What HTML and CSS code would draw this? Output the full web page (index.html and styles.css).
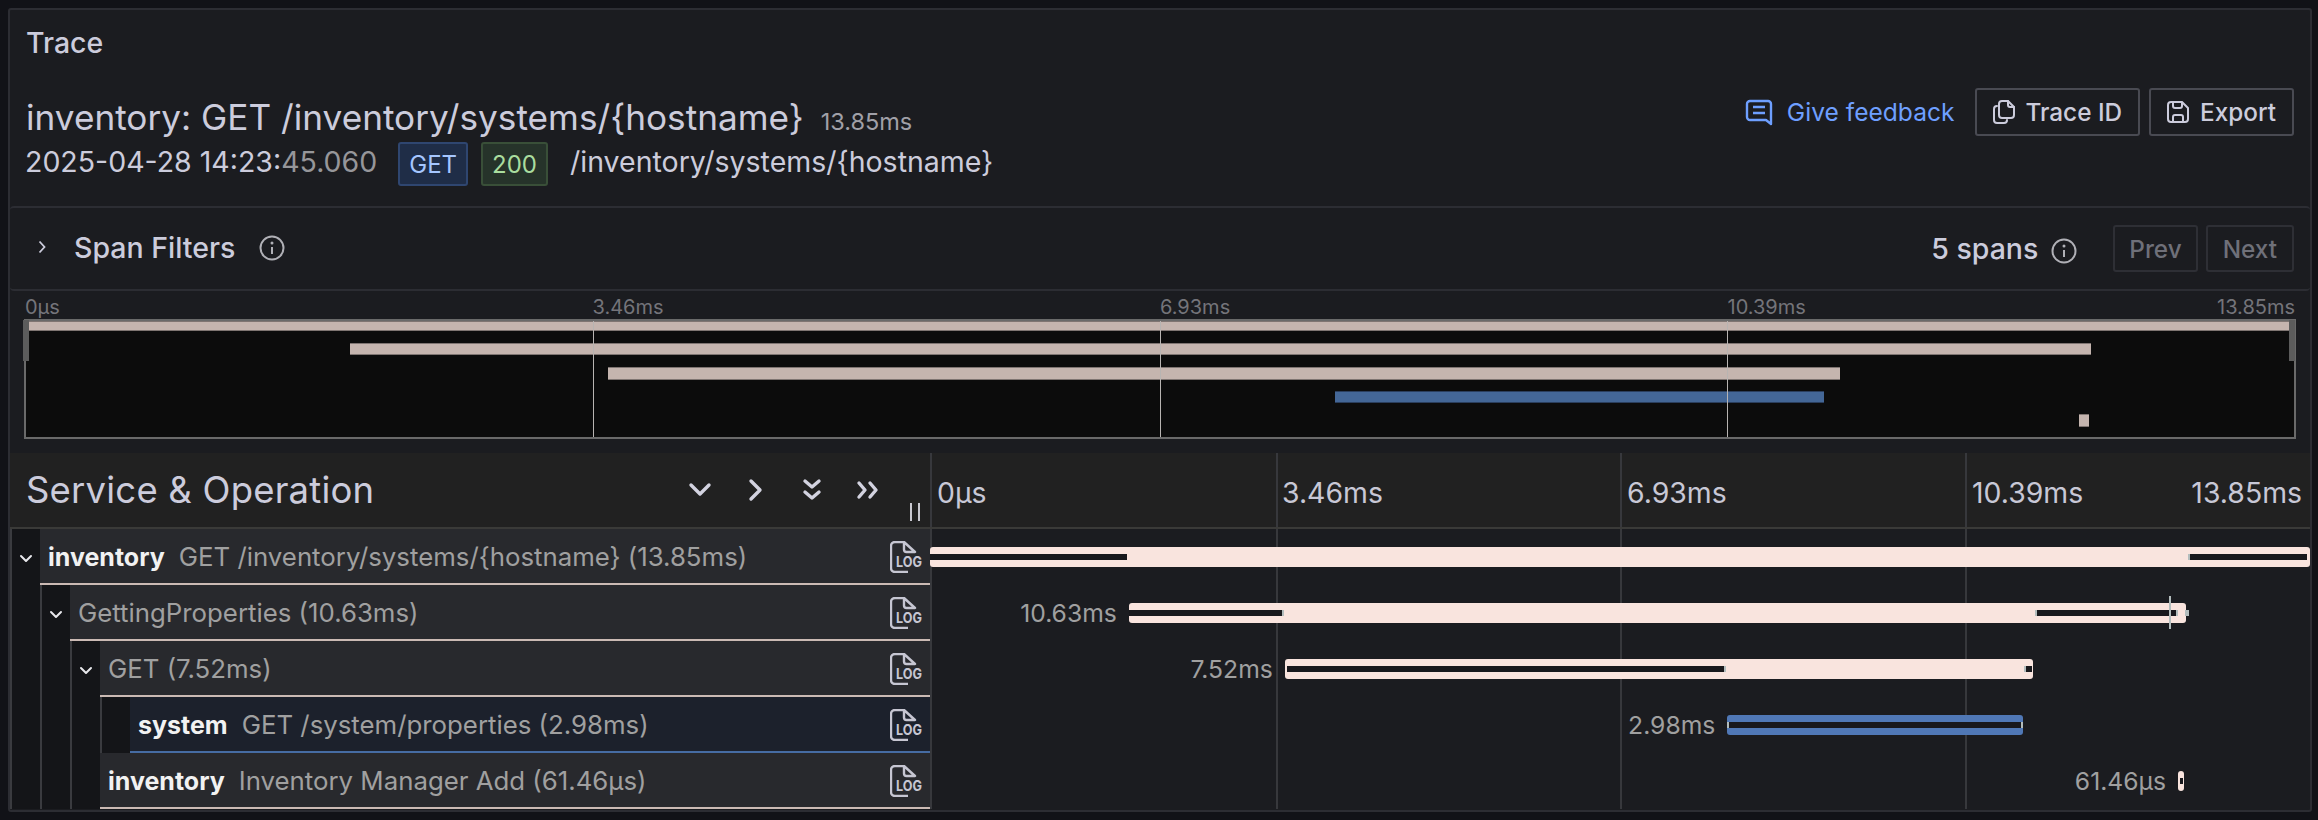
FILE: index.html
```html
<!DOCTYPE html>
<html lang="en">
<head>
<meta charset="utf-8">
<title>Trace</title>
<link rel="stylesheet" href="styles.css">
</head>
<body>
<main class="panel">
  <div class="panel-title">Trace</div>

  <header class="trace-head">
    <div class="trace-info">
      <div class="trace-name">
        <h1 class="trace-title">inventory: GET /inventory/systems/{hostname}</h1>
        <span class="trace-duration">13.85ms</span>
      </div>
      <div class="trace-meta">
        <span class="trace-time">2025-04-28 14:23:<span class="trace-time-dim">45.060</span></span>
        <span class="tag tag-blue">GET</span>
        <span class="tag tag-green">200</span>
        <span class="trace-url">/inventory/systems/{hostname}</span>
      </div>
    </div>
    <div class="trace-actions">
      <a class="feedback">
        <svg class="feedback-icon" width="28" height="27" viewBox="0 0 28 27"><path d="M5 2h18a3 3 0 0 1 3 3v20l-5-4H5a3 3 0 0 1-3-3V5a3 3 0 0 1 3-3z"/><path d="M8 8h12M8 14h12"/></svg>
        Give feedback
      </a>
      <button class="btn btn-trace">
        <svg class="btn-icon" width="22" height="24" viewBox="0 0 22 24"><path d="M9 1h6l6 6v8a3 3 0 0 1-3 3H9a3 3 0 0 1-3-3V4a3 3 0 0 1 3-3z"/><path d="M15 1v4a2 2 0 0 0 2 2h4"/><path d="M4 6a3 3 0 0 0-3 3v11a3 3 0 0 0 3 3h7a3 3 0 0 0 3-3"/></svg>
        Trace ID
      </button>
      <button class="btn btn-export">
        <svg class="btn-icon" width="22" height="22" viewBox="0 0 22 22"><path d="M4 1h11l6 6v11a3 3 0 0 1-3 3H4a3 3 0 0 1-3-3V4a3 3 0 0 1 3-3z"/><path d="M6 1v4a2 2 0 0 0 2 2h5a2 2 0 0 0 2-2V1.500"/><path d="M6 21v-5a2 2 0 0 1 2-2h6a2 2 0 0 1 2 2v5"/></svg>
        Export
      </button>
    </div>
  </header>

  <section class="filters">
    <svg class="filters-chevron" width="8" height="14" viewBox="0 0 8 14"><path d="M1.500 1.500L6.500 7l-5 5.500"/></svg>
    <span class="filters-label">Span Filters</span>
    <svg class="info-icon filters-info" width="26" height="26" viewBox="0 0 26 26"><circle class="info-line" cx="13" cy="13" r="11.500"/><path class="info-line" d="M13 12v7"/><circle class="info-dot" cx="13" cy="8" r="1.500"/></svg>
    <span class="filters-count">5 spans</span>
    <svg class="info-icon count-info" width="26" height="26" viewBox="0 0 26 26"><circle class="info-line" cx="13" cy="13" r="11.500"/><path class="info-line" d="M13 12v7"/><circle class="info-dot" cx="13" cy="8" r="1.500"/></svg>
    <button class="btn btn-off btn-prev">Prev</button>
    <button class="btn btn-off btn-next">Next</button>
  </section>

  <section class="minimap">
    <div class="ruler ruler-mini">
      <span class="ruler-cell">0µs</span>
      <span class="ruler-cell">3.46ms</span>
      <span class="ruler-cell">6.93ms</span>
      <span class="ruler-cell ruler-last"><span>10.39ms</span><span>13.85ms</span></span>
    </div>
    <div class="mini-box">
      <i class="mini-bar" style="left:0;width:100%;top:0;height:10px"></i>
      <i class="mini-bar" style="left:14.27%;width:76.8%;top:22px;height:12px"></i>
      <i class="mini-bar" style="left:25.64%;width:54.36%;top:46px;height:13px"></i>
      <i class="mini-bar mini-blue" style="left:57.7%;width:21.56%;top:70px;height:12px"></i>
      <i class="mini-bar" style="left:90.53%;width:0.44%;top:93px;height:13px"></i>
      <i class="mini-tick" style="left:25%"></i>
      <i class="mini-tick" style="left:50%"></i>
      <i class="mini-tick" style="left:75%"></i>
      <i class="mini-handle mini-handle-l"></i>
      <i class="mini-handle mini-handle-r"></i>
    </div>
  </section>

  <section class="viewer">
    <div class="v-row v-head">
      <div class="v-left head-left">
        <h2 class="head-title">Service &amp; Operation</h2>
        <div class="head-icons">
          <svg class="head-icon" width="24" height="16" viewBox="0 0 24 16"><path d="M3 3l9 9 9-9"/></svg>
          <svg class="head-icon" width="16" height="24" viewBox="0 0 16 24"><path d="M3 3l9 9-9 9"/></svg>
          <svg class="head-icon" width="20" height="24" viewBox="0 0 20 24"><path d="M3 3l7 6 7-6M3 14l7 6 7-6"/></svg>
          <svg class="head-icon" width="24" height="20" viewBox="0 0 24 20"><path d="M3 3l6 7-6 7M14 3l6 7-6 7"/></svg>
        </div>
        <i class="resizer"></i>
      </div>
      <div class="v-right ruler ruler-main ticks">
        <span class="ruler-cell">0µs</span>
        <span class="ruler-cell">3.46ms</span>
        <span class="ruler-cell">6.93ms</span>
        <span class="ruler-cell ruler-last"><span>10.39ms</span><span>13.85ms</span></span>
      </div>
    </div>

    <div class="v-row">
      <div class="v-left">
        <span class="indent"><svg class="indent-chevron" width="14" height="10" viewBox="0 0 14 10"><path d="M2 2l5 5 5-5"/></svg></span>
        <div class="span-name">
          <span class="span-text"><b class="svc">inventory</b><span class="op">GET /inventory/systems/{hostname} (13.85ms)</span></span>
          <svg class="log-icon" width="38" height="32" viewBox="0 0 38 32"><path class="log-line" d="M14 1H5a4 4 0 0 0-4 4v22a4 4 0 0 0 4 4h13"/><path class="log-line" d="M14 1l11 10H16.500a2.500 2.500 0 0 1-2.500-2.500z"/><text class="log-text" x="6" y="25.500" textLength="26" lengthAdjust="spacingAndGlyphs">LOG</text></svg>
        </div>
      </div>
      <div class="v-right ticks">
        <div class="bar" style="left:0;width:100%">
          <i class="seg" style="left:0;width:197px"></i>
          <i class="seg seg-start" style="left:1258px;width:119px"></i>
        </div>
      </div>
    </div>

    <div class="v-row">
      <div class="v-left">
        <span class="indent"></span>
        <span class="indent"><svg class="indent-chevron" width="14" height="10" viewBox="0 0 14 10"><path d="M2 2l5 5 5-5"/></svg></span>
        <div class="span-name">
          <span class="span-text"><span class="op op-only">GettingProperties (10.63ms)</span></span>
          <svg class="log-icon" width="38" height="32" viewBox="0 0 38 32"><path class="log-line" d="M14 1H5a4 4 0 0 0-4 4v22a4 4 0 0 0 4 4h13"/><path class="log-line" d="M14 1l11 10H16.500a2.500 2.500 0 0 1-2.500-2.500z"/><text class="log-text" x="6" y="25.500" textLength="26" lengthAdjust="spacingAndGlyphs">LOG</text></svg>
        </div>
      </div>
      <div class="v-right ticks">
        <div class="bar" style="left:14.41%;width:76.61%">
          <span class="bar-label">10.63ms</span>
          <i class="seg seg-end" style="left:0;width:155px"></i>
          <i class="seg seg-start seg-end" style="left:906px;width:143px"></i>
          <i class="log-mark" style="left:1040px"></i>
          <i class="bar-tail"></i>
        </div>
      </div>
    </div>

    <div class="v-row">
      <div class="v-left">
        <span class="indent"></span>
        <span class="indent"></span>
        <span class="indent"><svg class="indent-chevron" width="14" height="10" viewBox="0 0 14 10"><path d="M2 2l5 5 5-5"/></svg></span>
        <div class="span-name">
          <span class="span-text"><span class="op op-only">GET (7.52ms)</span></span>
          <svg class="log-icon" width="38" height="32" viewBox="0 0 38 32"><path class="log-line" d="M14 1H5a4 4 0 0 0-4 4v22a4 4 0 0 0 4 4h13"/><path class="log-line" d="M14 1l11 10H16.500a2.500 2.500 0 0 1-2.500-2.500z"/><text class="log-text" x="6" y="25.500" textLength="26" lengthAdjust="spacingAndGlyphs">LOG</text></svg>
        </div>
      </div>
      <div class="v-right ticks">
        <div class="bar" style="left:25.71%;width:54.24%">
          <span class="bar-label">7.52ms</span>
          <i class="seg seg-end" style="left:2px;width:439px"></i>
          <i class="seg seg-start" style="left:739px;width:8px"></i>
        </div>
      </div>
    </div>

    <div class="v-row">
      <div class="v-left">
        <span class="indent"></span>
        <span class="indent"></span>
        <span class="indent"></span>
        <span class="indent"></span>
        <div class="span-name span-selected">
          <span class="span-text"><b class="svc">system</b><span class="op">GET /system/properties (2.98ms)</span></span>
          <svg class="log-icon" width="38" height="32" viewBox="0 0 38 32"><path class="log-line" d="M14 1H5a4 4 0 0 0-4 4v22a4 4 0 0 0 4 4h13"/><path class="log-line" d="M14 1l11 10H16.500a2.500 2.500 0 0 1-2.500-2.500z"/><text class="log-text" x="6" y="25.500" textLength="26" lengthAdjust="spacingAndGlyphs">LOG</text></svg>
        </div>
      </div>
      <div class="v-right ticks">
        <div class="bar bar-blue" style="left:57.78%;width:21.43%">
          <span class="bar-label">2.98ms</span>
          <i class="seg seg-start seg-end" style="left:0;width:296px"></i>
        </div>
      </div>
    </div>

    <div class="v-row">
      <div class="v-left">
        <span class="indent"></span>
        <span class="indent"></span>
        <span class="indent"></span>
        <div class="span-name">
          <span class="span-text"><b class="svc">inventory</b><span class="op">Inventory Manager Add (61.46µs)</span></span>
          <svg class="log-icon" width="38" height="32" viewBox="0 0 38 32"><path class="log-line" d="M14 1H5a4 4 0 0 0-4 4v22a4 4 0 0 0 4 4h13"/><path class="log-line" d="M14 1l11 10H16.500a2.500 2.500 0 0 1-2.500-2.500z"/><text class="log-text" x="6" y="25.500" textLength="26" lengthAdjust="spacingAndGlyphs">LOG</text></svg>
        </div>
      </div>
      <div class="v-right ticks">
        <div class="bar" style="left:90.44%;width:0.43%">
          <span class="bar-label">61.46µs</span>
          <i class="seg" style="left:2px;width:3px"></i>
        </div>
      </div>
    </div>
  </section>
</main>
</body>
</html>
```

FILE: styles.css
```css
* { box-sizing: border-box; }

html, body { height: 100%; }

body {
  margin: 0;
  background: #111217;
  color: #ccccdc;
  font-family: Inter, "Liberation Sans", sans-serif;
  overflow: hidden;
}

.panel {
  margin: 8px 6px 0 8px;
  height: 804px;
  border: 2px solid #2c2d33;
  border-radius: 3px;
  background: #1b1c20;
  display: flex;
  flex-direction: column;
  overflow: hidden;
}

.panel-title {
  height: 66px;
  line-height: 66px;
  padding-left: 16px;
  font-size: 28.500px;
  font-weight: 500;
}

/* header */
.trace-head {
  height: 130px;
  padding: 19px 16px 0;
  display: flex;
  justify-content: space-between;
  align-items: flex-start;
}

.trace-name {
  display: flex;
  align-items: baseline;
  height: 44px;
  line-height: 44px;
}

.trace-title {
  margin: 0;
  font-size: 35.200px;
  font-weight: 400;
}

.trace-duration {
  margin-left: 17px;
  font-size: 23.500px;
  color: #a0a0a8;
}

.trace-meta {
  display: flex;
  align-items: flex-start;
  margin: 3px 0 0 -1px;
  font-size: 28.500px;
  line-height: 40px;
}

.trace-time-dim { color: #96969a; }

.tag {
  height: 44px;
  line-height: 42px;
  padding: 0 9px;
  border: 2px solid;
  border-radius: 3px;
  font-size: 24px;
  margin-left: 13px;
}

.tag-blue {
  margin-left: 21px;
  background: #1f2d47;
  border-color: #2f4670;
  color: #a5c6ff;
}

.tag-green {
  background: #26332a;
  border-color: #394f38;
  color: #a9dd9e;
}

.trace-url { margin-left: 22px; }

.trace-actions {
  display: flex;
  align-items: center;
  margin-top: -7px;
}

.feedback {
  display: flex;
  align-items: center;
  gap: 14px;
  margin-right: 20px;
  font-size: 24.600px;
  color: #6e9fff;
}

.feedback-icon {
  fill: none;
  stroke: #6e9fff;
  stroke-width: 2.400;
  stroke-linejoin: round;
}

.btn {
  height: 48px;
  padding: 0 16px;
  border: 2px solid #494a52;
  border-radius: 3px;
  background: transparent;
  color: #ccccdc;
  font-family: inherit;
  font-size: 24.300px;
  font-weight: 500;
  display: inline-flex;
  align-items: center;
  gap: 11px;
}

.btn-icon {
  fill: none;
  stroke: #ccccdc;
  stroke-width: 2;
  stroke-linejoin: round;
  stroke-linecap: round;
}

.btn-export { margin-left: 9px; }

.btn-off {
  height: 47px;
  padding: 0 15px;
  border-color: #2e2f35;
  color: #6f7079;
}

.btn-prev { margin-left: 36px; padding: 0 14px; }
.btn-next { margin-left: 8px; }

/* filters */
.filters {
  height: 85px;
  padding: 0 16px 0 28px;
  border: 2px solid #2c2d33;
  border-width: 2px 0 2px 0;
  border-radius: 4px;
  display: flex;
  align-items: center;
}

.filters-chevron {
  fill: none;
  stroke: #ccccdc;
  stroke-width: 1.800;
  margin-top: -4px;
}

.filters-label {
  margin-left: 28px;
  margin-top: -2px;
  font-size: 28.500px;
  font-weight: 500;
}

.info-icon { flex: none; }
.info-line { fill: none; stroke: #b0b0b6; stroke-width: 2; }
.info-dot { fill: #b0b0b6; }

.filters-info { margin-left: 24px; margin-top: -2px; }

.filters-count {
  margin-left: auto;
  font-size: 28.500px;
  font-weight: 500;
}

.count-info { margin-left: 13px; margin-top: 4px; }

/* minimap */
.minimap {
  height: 162px;
  padding: 0 14px 14px 14px;
}

.ruler {
  display: grid;
  grid-template-columns: repeat(4, 1fr);
}

.ruler-last {
  display: flex;
  justify-content: space-between;
}

.ruler-mini {
  height: 28px;
  padding: 4px 1px 0;
  line-height: 24px;
  font-size: 20px;
  color: #74747a;
}

.mini-box {
  position: relative;
  height: 120px;
  background: #0c0c0c;
  border: 2px solid #6a6a6a;
}

.mini-bar {
  position: absolute;
  background: #c5b5af;
  border-top: 1px solid #7f7572;
  border-bottom: 1px solid #7f7572;
}

.mini-blue {
  background: #446797;
  border-color: #2b3f5e;
}

.mini-tick {
  position: absolute;
  top: 0;
  bottom: 0;
  width: 1px;
  background: #b8b4b2;
}

.mini-handle {
  position: absolute;
  top: -1px;
  width: 6px;
  height: 41px;
  background: #5c5c5c;
}

.mini-handle-l { left: -3px; }
.mini-handle-r { right: -1px; }

/* viewer */
.viewer { flex: 1; }

.v-row {
  display: grid;
  grid-template-columns: 920px 1fr;
  height: 56px;
}

.v-left {
  display: flex;
  position: relative;
  min-width: 0;
}

.v-right {
  position: relative;
}

.ticks {
  background-image:
    linear-gradient(#37383c, #37383c),
    linear-gradient(#37383c, #37383c),
    linear-gradient(#37383c, #37383c),
    linear-gradient(#37383c, #37383c);
  background-repeat: no-repeat;
  background-size: 2px 100%;
  background-position: 0 0, calc(25% + 1px) 0, calc(50% + 1px) 0, calc(75% + 1px) 0;
}

.v-head {
  height: 76px;
  background: #212121;
  border-bottom: 2px solid #3a3a38;
}

.head-left {
  align-items: center;
  padding: 0 34px 0 16px;
}

.head-title {
  margin: 0;
  font-size: 36.500px;
  font-weight: 400;
  letter-spacing: 0.2px;
}

.head-icons {
  margin-left: auto;
  display: grid;
  grid-template-columns: repeat(4, 56px);
  justify-items: center;
  align-items: center;
}

.head-icon {
  fill: none;
  stroke: #d3d3e0;
  stroke-width: 3.400;
  stroke-linecap: round;
  stroke-linejoin: round;
}

.resizer {
  position: absolute;
  right: 10px;
  bottom: 6px;
  width: 10px;
  height: 18px;
  border-left: 2px solid #c8c8d0;
  border-right: 2px solid #c8c8d0;
}

.ruler-main {
  align-items: center;
  padding-top: 4px;
  font-size: 28.400px;
  color: #c8c8d6;
}

.ruler-main .ruler-cell { padding-left: 7px; }
.ruler-main .ruler-last { padding-right: 8px; }

.indent {
  flex: none;
  width: 30px;
  border-left: 2px solid #3a3b3f;
  background: #141518;
  display: flex;
  align-items: center;
  justify-content: center;
}

.indent-chevron {
  margin-top: 4px;
  margin-right: 1px;
  fill: none;
  stroke: #e8e8ec;
  stroke-width: 2;
  stroke-linecap: round;
  stroke-linejoin: round;
}

.span-name {
  flex: 1;
  min-width: 0;
  display: flex;
  align-items: center;
  justify-content: space-between;
  padding: 2px 2px 0 8px;
  background: #28292d;
  border-bottom: 2px solid #cbbab4;
}

.span-selected {
  background: #1c212c;
  border-bottom-color: #466ca3;
}

.span-text {
  margin-top: -2px;
  font-size: 25px;
  white-space: nowrap;
}

.svc {
  font-weight: 700;
  color: #f2f2f2;
}

.op {
  margin-left: 14px;
  font-size: 25.800px;
  color: #a0a0a0;
}

.op-only { margin-left: 0; }

.log-line {
  fill: none;
  stroke: #c6c6d2;
  stroke-width: 2.400;
  stroke-linejoin: round;
}

.log-text {
  fill: #c6c6d2;
  font-family: Inter, "Liberation Sans", sans-serif;
  font-weight: 700;
  font-size: 14.500px;
}

.bar {
  position: absolute;
  top: 18px;
  height: 20px;
  background: #f9e4de;
  border-radius: 3px;
}

.bar-blue { background: #5078b6; }

.seg {
  position: absolute;
  top: 7px;
  height: 6px;
  background: #18181c;
}

.seg-start { border-left: 2px solid #b3bdbd; }
.seg-end { border-right: 2px solid #b3bdbd; }

.bar-label {
  position: absolute;
  right: 100%;
  top: 50%;
  transform: translateY(-50%);
  margin-right: 12px;
  font-size: 24.700px;
  color: #a0a0a0;
  white-space: nowrap;
}

.log-mark {
  position: absolute;
  top: -7px;
  height: 33px;
  width: 2px;
  background: #b3bdbd;
}

.bar-tail {
  position: absolute;
  left: 100%;
  margin-left: -1px;
  top: 7px;
  width: 4px;
  height: 6px;
  background: #b3bdbd;
}
```
